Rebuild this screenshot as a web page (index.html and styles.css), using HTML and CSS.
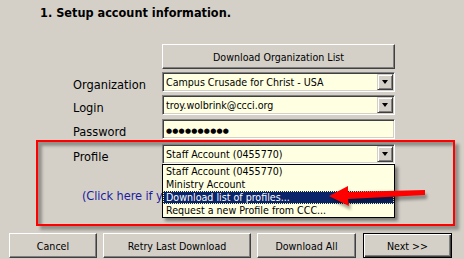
FILE: index.html
```html
<!DOCTYPE html>
<html lang="en">
<head>
  <meta charset="UTF-8">
  <title>Setup account information</title>
  <link rel="stylesheet" href="styles.css">
</head>
<body>
  <!-- Red annotation frame -->
  <div class="callout-box"></div>

  <h1 class="step-title">1. Setup account information.</h1>

  <!-- Account form -->
  <div class="account-form">
    <span></span>
    <button class="btn btn-wide">Download Organization List</button>

    <span class="field-label">Organization</span>
    <div class="combo">Campus Crusade for Christ - USA<span class="combo-arrow"></span></div>

    <span class="field-label">Login</span>
    <div class="combo">troy.wolbrink@ccci.org<span class="combo-arrow"></span></div>

    <span class="field-label row-password">Password</span>
    <div class="combo row-password"><span class="password-mask">●●●●●●●●●●</span></div>

    <span class="field-label row-profile">Profile</span>
    <div class="combo row-profile">Staff Account (0455770)<span class="combo-arrow"></span>
      <ul class="combo-list">
        <li>Staff Account (0455770)</li>
        <li>Ministry Account</li>
        <li class="selected">Download list of profiles...</li>
        <li>Request a new Profile from CCC...</li>
      </ul>
    </div>

    <div class="hint-row">
      <a href="#" class="profile-hint">(Click here if y</a>
    </div>
  </div>

  <!-- Dialog buttons -->
  <div class="dialog-actions">
    <button class="btn btn-cancel">Cancel</button>
    <button class="btn btn-retry">Retry Last Download</button>
    <button class="btn btn-all">Download All</button>
    <button class="btn btn-next">Next &gt;&gt;</button>
  </div>

  <!-- Red arrow pointing at the list item -->
  <svg class="callout-arrow" width="464" height="259" viewBox="0 0 464 259">
    <defs>
      <filter id="soft"><feGaussianBlur stdDeviation="1.5"/></filter>
    </defs>
    <polygon points="329,196 348,186 348,192 425,190 425,195 348,199 349,206" fill="#000" opacity="0.35" filter="url(#soft)" transform="translate(2 4)"/>
    <polygon points="329,196 348,186 348,192 425,190 425,195 348,199 349,206" fill="#f00"/>
  </svg>
</body>
</html>
```

FILE: styles.css
```css
/* Reset */
* {
  margin: 0;
  padding: 0;
  box-sizing: border-box;
}

body {
  position: relative;
  width: 464px;
  height: 259px;
  overflow: hidden;
  background-color: #d4d0c8;
  color: #000;
  font-family: "DejaVu Sans Condensed", "DejaVu Sans", sans-serif;
}

/* Title */
.step-title {
  font-size: 12.6px;
  font-weight: bold;
  line-height: 16px;
  padding: 5px 0 0 40px;
}

/* Form grid */
.account-form {
  position: relative;
  display: grid;
  grid-template-columns: 89px 233px;
  row-gap: 3px;
  margin: 23px 0 0 73px;
}

.field-label {
  align-self: end;
  font-size: 12.7px;
  line-height: 14px;
}

.row-password {
  margin-top: 1px;
}

.row-profile {
  margin-top: 2px;
}

/* Classic buttons */
.btn {
  height: 25px;
  font-family: inherit;
  font-size: 10.6px;
  color: #000;
  background-color: #d4d0c8;
  border: 1px solid;
  border-color: #fff #404040 #404040 #fff;
  box-shadow: inset -1px -1px #808080;
}

/* Combo boxes */
.combo {
  position: relative;
  height: 20px;
  padding: 1px 0 0 3px;
  font-size: 10.6px;
  line-height: 16px;
  white-space: nowrap;
  background-color: #ffffe1;
  border: 1px solid;
  border-color: #808080 #fff #fff #808080;
  box-shadow: inset 1px 1px #404040, inset -1px -1px #d4d0c8;
}

.combo-arrow {
  position: absolute;
  top: 1px;
  right: 1px;
  width: 16px;
  height: 16px;
  display: flex;
  justify-content: center;
  align-items: center;
  background-color: #d4d0c8;
  border: 1px solid;
  border-color: #d4d0c8 #404040 #404040 #d4d0c8;
  box-shadow: inset 1px 1px #fff, inset -1px -1px #808080;
}

.combo-arrow::after {
  content: "";
  border-top: 4px solid #000;
  border-left: 3.5px solid transparent;
  border-right: 3.5px solid transparent;
}

.password-mask {
  font-family: "DejaVu Sans", sans-serif;
  font-size: 7px;
  letter-spacing: 0.2px;
  font-weight: bold;
}

/* Open drop-down list */
.combo-list {
  position: absolute;
  top: calc(100% + 1px);
  left: -1px;
  width: 233px;
  z-index: 2;
  list-style: none;
  background-color: #ffffe1;
  border: 1px solid #000;
  box-shadow: 3px 3px 3px rgba(0, 0, 0, 0.4);
}

.combo-list li {
  height: 13px;
  line-height: 13px;
  padding-left: 3px;
}

.combo-list li.selected {
  background-color: #0a246a;
  color: #fff;
  outline: 1px dotted #ffffb0;
  outline-offset: -1px;
}

/* Hint link, its tail hidden behind the open list */
.hint-row {
  grid-column: 1 / -1;
  margin-top: 18px;
  padding-left: 9px;
}

.profile-hint {
  font-size: 12.7px;
  line-height: 16px;
  letter-spacing: -0.1px;
  color: #1c1ca0;
  text-decoration: none;
  white-space: nowrap;
}

/* Bottom buttons */
.dialog-actions {
  display: flex;
  gap: 6px;
  margin-top: 29px;
  padding-left: 9px;
}

.btn-cancel { width: 88px; }
.btn-retry { width: 148px; }
.btn-all { width: 99px; }

.btn-next {
  width: 89px;
  margin-left: 1px;
  border: 1px solid #000;
  box-shadow: inset 1px 1px #fff, inset -1px -1px #404040, inset -2px -2px #808080;
}

.btn-wide {
  width: 233px;
}

/* Annotations */
.callout-box {
  position: absolute;
  left: 36px;
  top: 140px;
  width: 419px;
  height: 86px;
  border: 2px solid #f00;
  box-shadow: 4px 4px 3px rgba(0, 0, 0, 0.3), inset 4px 4px 3px rgba(0, 0, 0, 0.3);
}

.callout-arrow {
  position: absolute;
  left: 0;
  top: 0;
  z-index: 3;
  pointer-events: none;
}
```
